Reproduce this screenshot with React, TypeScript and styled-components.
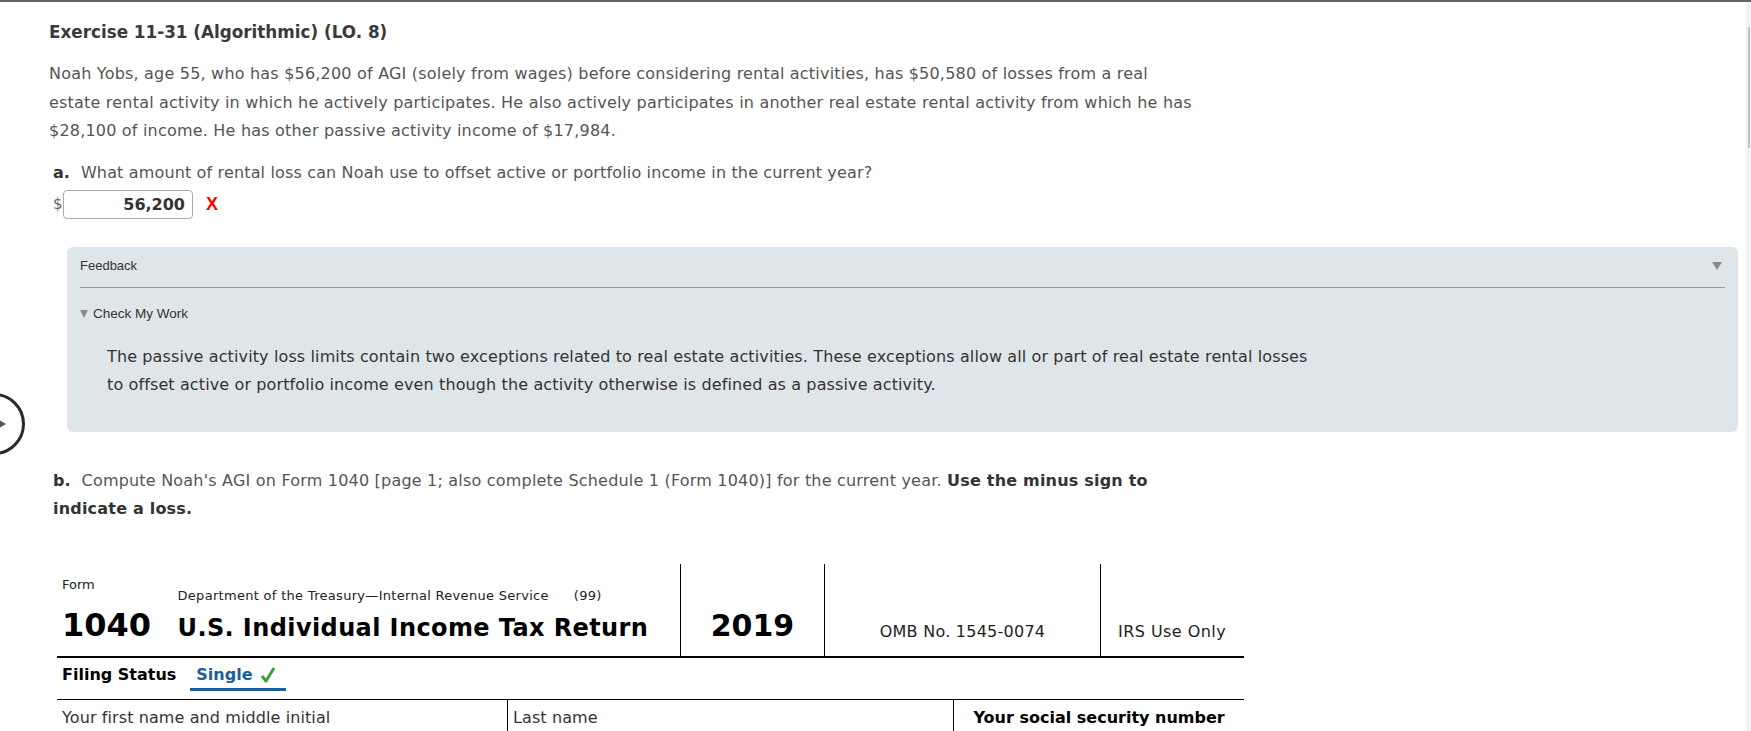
import React from "react";
import styled, { createGlobalStyle } from "styled-components";

const GlobalStyle = createGlobalStyle`
  html, body { margin: 0; padding: 0; background: #fff; overflow: hidden; }
  body { font-family: "DejaVu Sans", Verdana, sans-serif; color: #333; }
  * { box-sizing: border-box; }
`;

const Shell = styled.div`
  position: relative;
  width: 1751px;
  height: 731px;
  overflow: hidden;
`;

const TopBar = styled.div`
  height: 2px;
  background: #646464;
`;

const Page = styled.div`
  display: flex;
  height: 729px;
`;

const Content = styled.main`
  flex: 1;
  padding: 18px 0 0 49px;
  min-width: 0;
`;

const ScrollRail = styled.div`
  width: 5px;
  background: #f1f1f1;
  padding: 25px 1px 0 2px;
`;

const ScrollThumb = styled.div`
  height: 121px;
  background: #c1c1c1;
  border-radius: 1px;
`;

const Title = styled.h1`
  margin: 0;
  font-size: 16.8px;
  line-height: 24px;
  font-weight: bold;
  color: #3a3a3a;
`;

const Paragraph = styled.p`
  margin: 16px 0 0;
  font-size: 16px;
  letter-spacing: 0.2px;
  line-height: 28.5px;
  color: #555;
  white-space: nowrap;
`;

const Question = styled.p<{ $top: number; $spacing: number }>`
  margin: ${(p) => p.$top}px 0 0 4px;
  font-size: 16px;
  letter-spacing: ${(p) => p.$spacing}px;
  line-height: 28px;
  color: #555;
  white-space: nowrap;
`;

const PartLabel = styled.b`
  color: #333;
  margin-right: 11px;
  letter-spacing: 0;
`;

const Strong = styled.b`
  color: #333;
`;

const AnswerRow = styled.div`
  display: flex;
  align-items: center;
  margin: 3px 0 0 4px;
  height: 29px;
`;

const Dollar = styled.span`
  font-size: 15px;
  color: #666;
  width: 10px;
`;

const AnswerBox = styled.div`
  width: 130px;
  height: 29px;
  border: 1px solid #a9a9a9;
  border-radius: 4px;
  background: #fff;
  text-align: right;
  padding-right: 7px;
  font-size: 16px;
  font-weight: bold;
  line-height: 27px;
  color: #333;
`;

const WrongMark = styled.span`
  margin-left: 13px;
  color: #f00;
  font-size: 18px;
  font-weight: bold;
  font-family: "Liberation Sans", Arial, sans-serif;
`;

const FeedbackPanel = styled.section`
  margin: 28px 8px 0 18px;
  background: #dfe6e9;
  border-radius: 6px;
  padding: 11px 13px 33px;
`;

const PanelHeader = styled.div`
  display: flex;
  justify-content: space-between;
  align-items: center;
  height: 16px;
  font-family: "Liberation Sans", Arial, sans-serif;
  font-size: 13px;
  color: #333;
`;

const Caret = styled.span`
  width: 0;
  height: 0;
  border-left: 5px solid transparent;
  border-right: 5px solid transparent;
  border-top: 8px solid #8a8a8a;
  margin-right: 3px;
`;

const Divider = styled.hr`
  margin: 13px 0 0;
  border: none;
  border-top: 1px solid #979c9f;
`;

const CheckToggle = styled.div`
  display: flex;
  align-items: center;
  gap: 5px;
  margin-top: 18px;
  height: 16px;
  font-family: "Liberation Sans", Arial, sans-serif;
  font-size: 13.5px;
  color: #333;
`;

const SmallCaret = styled.span`
  width: 0;
  height: 0;
  border-left: 4px solid transparent;
  border-right: 4px solid transparent;
  border-top: 8px solid #8a8a8a;
  margin-top: 1px;
`;

const FeedbackText = styled.p`
  margin: 21px 0 0 27px;
  font-size: 16px;
  letter-spacing: 0.12px;
  line-height: 28px;
  color: #333;
  white-space: nowrap;
`;

const Form = styled.div`
  margin: 41px 0 0 8px;
  width: 1187px;
  color: #111;
`;

const FormHeader = styled.div`
  display: grid;
  grid-template-columns: 623px 144px 276px 144px;
  height: 94px;
  border-bottom: 2px solid #000;
`;

const HeaderMain = styled.div`
  display: grid;
  grid-template-columns: 115.5px 1fr;
  grid-template-rows: 27px 52px;
  padding: 13px 0 0 5px;
`;

const FormLabel = styled.span`
  font-size: 13px;
  line-height: 16px;
  align-self: start;
  color: #222;
`;

const Agency = styled.span`
  font-size: 13px;
  letter-spacing: 0.3px;
  line-height: 16px;
  align-self: end;
  color: #222;
  white-space: nowrap;
`;

const Gap = styled.span`
  display: inline-block;
  width: 25px;
`;

const FormNumber = styled.span`
  font-size: 32px;
  font-weight: bold;
  line-height: 42px;
  align-self: baseline;
  color: #000;
`;

const FormTitle = styled.span`
  font-size: 24px;
  letter-spacing: 0.4px;
  font-weight: bold;
  line-height: 42px;
  align-self: baseline;
  color: #000;
  white-space: nowrap;
`;

const HeaderCell = styled.div<{ $align: string }>`
  border-left: 1px solid #000;
  display: flex;
  align-items: flex-end;
  justify-content: ${(p) => p.$align};
  padding: 0 0 12px ${(p) => (p.$align === "flex-start" ? "17px" : "0")};
`;

const Year = styled.span`
  font-size: 30px;
  font-weight: bold;
  line-height: 36px;
  color: #000;
`;

const HeaderNote = styled.span<{ $spacing: number }>`
  font-size: 16px;
  letter-spacing: ${(p) => p.$spacing}px;
  line-height: 24px;
  color: #222;
`;

const FilingRow = styled.div`
  display: flex;
  align-items: flex-start;
  gap: 14px;
  height: 42px;
  padding: 5px 0 0 5px;
  border-bottom: 1px solid #000;
`;

const FilingLabel = styled.span`
  font-size: 16px;
  font-weight: bold;
  line-height: 24px;
  color: #000;
`;

const FilingChoice = styled.span`
  display: inline-flex;
  align-items: center;
  gap: 7px;
  padding: 0 10px 1px 6px;
  border-bottom: 3px solid #1a5e9a;
  font-size: 16px;
  font-weight: bold;
  line-height: 24px;
  color: #1a5e9a;
`;

const NameRow = styled.div`
  display: grid;
  grid-template-columns: 450px 445.5px 1fr;
  height: 31px;
`;

const NameCell = styled.div<{ $first?: boolean; $pad: number; $bold?: boolean }>`
  border-left: ${(p) => (p.$first ? "none" : "1px solid #000")};
  padding: 6px 0 0 ${(p) => p.$pad}px;
  font-size: 16px;
  letter-spacing: ${(p) => (p.$bold ? "0" : "0.1px")};
  line-height: 24px;
  font-weight: ${(p) => (p.$bold ? "bold" : "normal")};
  color: ${(p) => (p.$bold ? "#000" : "#333")};
  white-space: nowrap;
`;

const NavCircle = styled.div`
  position: absolute;
  left: -37px;
  top: 393px;
  width: 62px;
  height: 62px;
  border: 3px solid #2b2b2b;
  border-radius: 50%;
  display: flex;
  align-items: center;
  justify-content: flex-end;
  padding-right: 16px;
`;

const Check = () => (
  <svg width="16" height="16" viewBox="0 0 16 16" aria-hidden="true">
    <path d="M2 9 L6 14 L14 1" fill="none" stroke="#3aa03a" strokeWidth="3" strokeLinejoin="round" />
  </svg>
);

export default function App() {
  return (
    <Shell>
      <GlobalStyle />
      <TopBar />
      <Page>
        <Content>
          <Title>Exercise 11-31 (Algorithmic) (LO. 8)</Title>
          <Paragraph>
            Noah Yobs, age 55, who has $56,200 of AGI (solely from wages) before considering rental activities, has $50,580 of losses from a real
            <br />
            estate rental activity in which he actively participates. He also actively participates in another real estate rental activity from which he has
            <br />
            $28,100 of income. He has other passive activity income of $17,984.
          </Paragraph>
          <Question $top={13} $spacing={0.15}>
            <PartLabel>a.</PartLabel>What amount of rental loss can Noah use to offset active or portfolio income in the current year?
          </Question>
          <AnswerRow>
            <Dollar>$</Dollar>
            <AnswerBox>56,200</AnswerBox>
            <WrongMark>X</WrongMark>
          </AnswerRow>
          <FeedbackPanel>
            <PanelHeader>
              <span>Feedback</span>
              <Caret />
            </PanelHeader>
            <Divider />
            <CheckToggle>
              <SmallCaret />
              <span>Check My Work</span>
            </CheckToggle>
            <FeedbackText>
              The passive activity loss limits contain two exceptions related to real estate activities. These exceptions allow all or part of real estate rental losses
              <br />
              to offset active or portfolio income even though the activity otherwise is defined as a passive activity.
            </FeedbackText>
          </FeedbackPanel>
          <Question $top={35} $spacing={0.2}>
            <PartLabel>b.</PartLabel>Compute Noah's AGI on Form 1040 [page 1; also complete Schedule 1 (Form 1040)] for the current year.{" "}
            <Strong>Use the minus sign to</Strong>
            <br />
            <Strong>indicate a loss.</Strong>
          </Question>
          <Form>
            <FormHeader>
              <HeaderMain>
                <FormLabel>Form</FormLabel>
                <Agency>
                  Department of the Treasury—Internal Revenue Service<Gap />(99)
                </Agency>
                <FormNumber>1040</FormNumber>
                <FormTitle>U.S. Individual Income Tax Return</FormTitle>
              </HeaderMain>
              <HeaderCell $align="center">
                <Year>2019</Year>
              </HeaderCell>
              <HeaderCell $align="center">
                <HeaderNote $spacing={0.25}>OMB No. 1545-0074</HeaderNote>
              </HeaderCell>
              <HeaderCell $align="flex-start">
                <HeaderNote $spacing={0.45}>IRS Use Only</HeaderNote>
              </HeaderCell>
            </FormHeader>
            <FilingRow>
              <FilingLabel>Filing Status</FilingLabel>
              <FilingChoice>
                Single
                <Check />
              </FilingChoice>
            </FilingRow>
            <NameRow>
              <NameCell $first $pad={5}>Your first name and middle initial</NameCell>
              <NameCell $pad={5}>Last name</NameCell>
              <NameCell $pad={20} $bold>Your social security number</NameCell>
            </NameRow>
          </Form>
        </Content>
        <ScrollRail>
          <ScrollThumb />
        </ScrollRail>
      </Page>
      <NavCircle>
        <svg width="10" height="12" viewBox="0 0 10 12" aria-hidden="true">
          <path d="M0 0 L10 6 L0 12 Z" fill="#555" />
        </svg>
      </NavCircle>
    </Shell>
  );
}
